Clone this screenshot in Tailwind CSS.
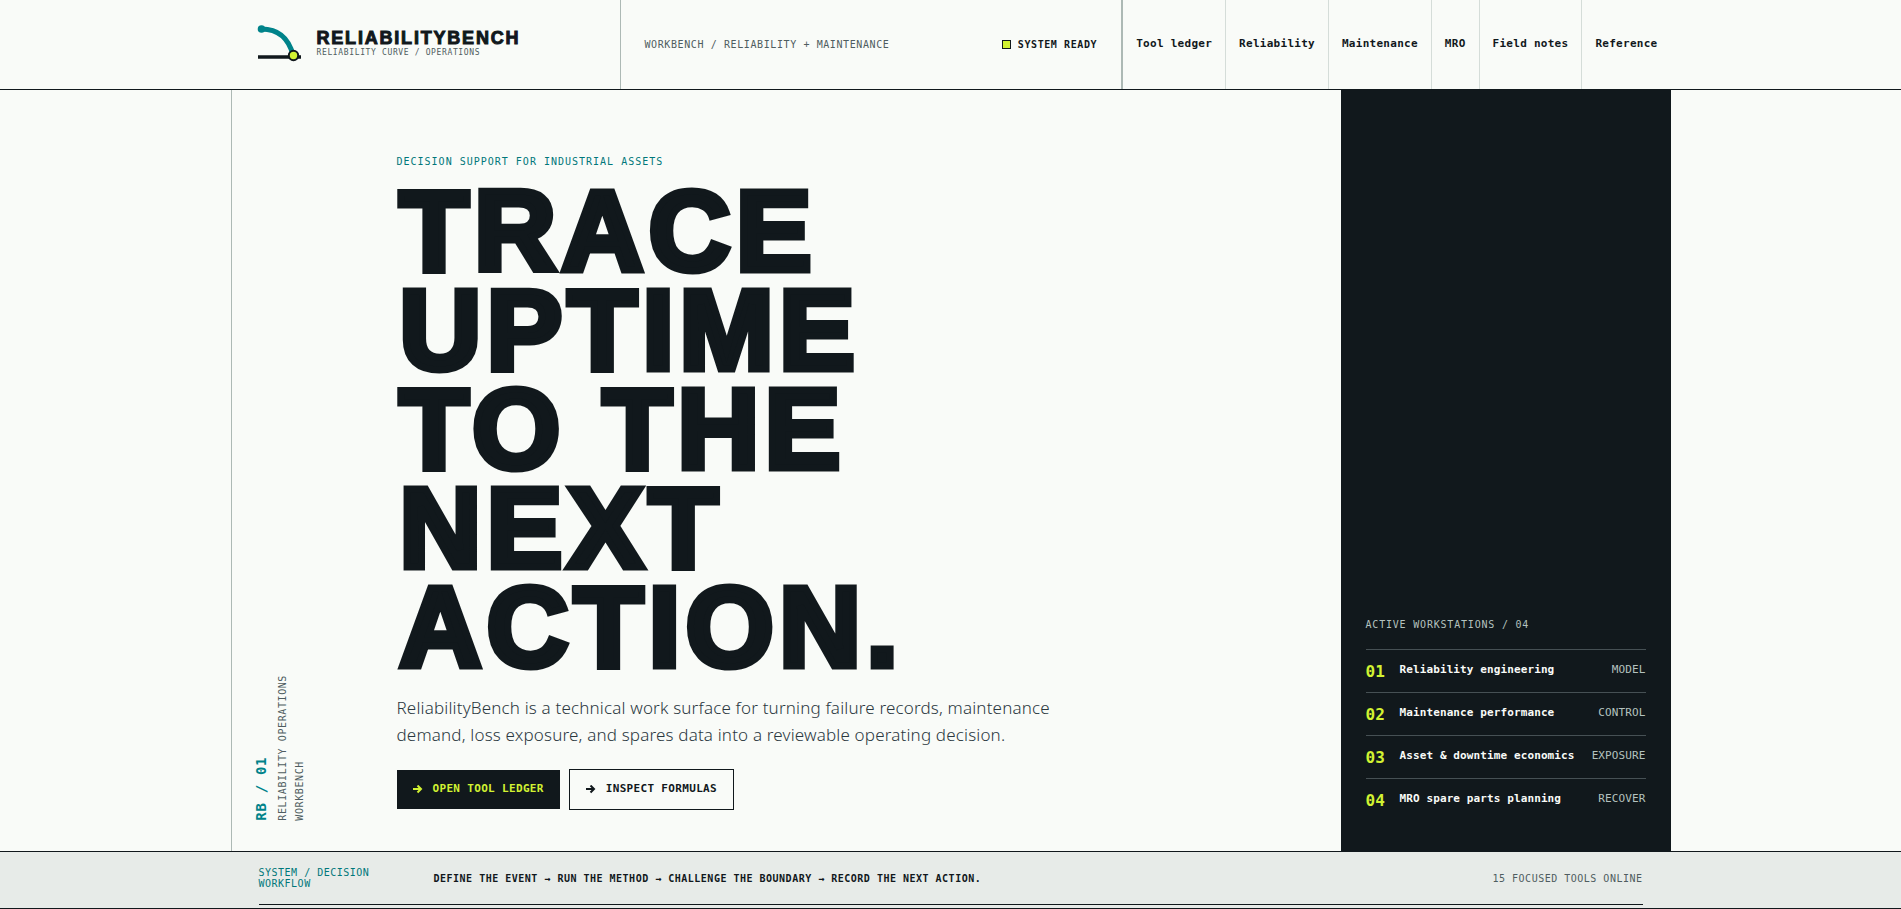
<!DOCTYPE html>
<html lang="en">
<head>
    <meta charset="UTF-8">
    <meta name="viewport" content="width=device-width, initial-scale=1.0">
    <title>ReliabilityBench</title>
    <script src="https://cdn.jsdelivr.net/npm/@tailwindcss/browser@4"></script>
</head>
<body class="bg-[#f9fbf8] text-[#11181c] font-['DejaVu_Sans_Mono',monospace] overflow-x-hidden">
    <!-- Header -->
    <header class="border-b border-[#11181c]">
        <div class="max-w-[1440px] mx-auto flex h-[89px]">
            <a href="#" class="w-[389px] shrink-0 flex items-center gap-4 pl-[26px] pb-0.5">
                <svg class="w-[44px] h-[40px] shrink-0" viewBox="0 0 44 40" fill="none">
                    <path d="M1 33H44" stroke="#11181c" stroke-width="3.500"/>
                    <path d="M4.500 5C20 5 31 12 36 31" stroke="#00838a" stroke-width="5"/>
                    <circle cx="4.500" cy="5" r="3.800" fill="#00838a"/>
                    <circle cx="36.500" cy="31.500" r="4.700" fill="#d2f232" stroke="#11181c" stroke-width="2"/>
                </svg>
                <span class="flex flex-col">
                    <span class="font-['Liberation_Sans',sans-serif] font-bold text-[18px] leading-[18px] tracking-widest [-webkit-text-stroke:1px_#11181c]">RELIABILITYBENCH</span>
                    <span class="text-[8px] leading-[12px] tracking-[0.08em] text-[#4f5d60]">RELIABILITY CURVE / OPERATIONS</span>
                </span>
            </a>
            <div class="flex-1 flex items-center justify-between px-6 border-l border-r-2 border-[#adb9b5] text-[10px] tracking-[0.06em] whitespace-nowrap">
                <span class="text-[#4f5d60]">WORKBENCH / RELIABILITY + MAINTENANCE</span>
                <span class="flex items-center gap-[7px] font-bold">
                    <span class="size-[9px] bg-[#d2f232] border border-[#11181c]"></span>SYSTEM READY
                </span>
            </div>
            <nav class="flex text-[11px] font-bold tracking-wide whitespace-nowrap divide-x divide-[#d5ddd9]">
                <a href="#" class="flex items-center px-[13px]">Tool ledger</a>
                <a href="#" class="flex items-center px-[13px]">Reliability</a>
                <a href="#" class="flex items-center px-[13px]">Maintenance</a>
                <a href="#" class="flex items-center px-[13px]">MRO</a>
                <a href="#" class="flex items-center px-[13px]">Field notes</a>
                <a href="#" class="flex items-center px-[13px]">Reference</a>
            </nav>
        </div>
    </header>

    <!-- Hero -->
    <main class="max-w-[1440px] mx-auto flex border-l border-[#adb9b5]">
        <div class="w-[165px] shrink-0 flex items-end pl-5 pb-[30px]">
            <div class="[writing-mode:vertical-rl] rotate-180">
                <p class="text-[14px] leading-[18px] font-bold tracking-[0.05em] text-[#00838a]">RB / 01</p>
                <p class="mr-1 text-[10px] leading-[17px] tracking-[0.06em] text-[#4f5d60]">RELIABILITY OPERATIONS<br>WORKBENCH</p>
            </div>
        </div>

        <section class="flex-1 pt-16 pb-[41px]">
            <p class="text-[10px] leading-[16px] tracking-widest text-[#00777a]">DECISION SUPPORT FOR INDUSTRIAL ASSETS</p>
            <h1 class="mt-3 pl-[3px] font-['Liberation_Sans',sans-serif] font-bold text-[113px] leading-[99px] tracking-wider [-webkit-text-stroke:7px_#11181c]">TRACE<br>UPTIME<br>TO THE<br>NEXT<br>ACTION.</h1>
            <p class="mt-[17px] max-w-[680px] font-['Noto_Sans',sans-serif] font-light text-[17px] leading-[27px] tracking-[0.01em] text-[#2b383f]">ReliabilityBench is a technical work surface for turning failure records, maintenance demand, loss exposure, and spares data into a reviewable operating decision.</p>
            <div class="mt-[21px] flex items-center gap-[9px] text-[11px] font-bold tracking-[0.03em]">
                <a href="#" class="flex items-center gap-[10px] h-[39px] px-4 bg-[#11181c] text-[#d2f232]">
                    <svg class="size-[10px]" viewBox="0 0 10 10" fill="none" stroke="currentColor" stroke-width="2"><path d="M0 4H8M4.500 0.500L8 4L4.500 7.500"/></svg>OPEN TOOL LEDGER
                </a>
                <a href="#" class="flex items-center gap-[10px] h-[41px] px-4 border border-[#11181c]">
                    <svg class="size-[10px]" viewBox="0 0 10 10" fill="none" stroke="currentColor" stroke-width="2"><path d="M0 4H8M4.500 0.500L8 4L4.500 7.500"/></svg>INSPECT FORMULAS
                </a>
            </div>
        </section>

        <aside class="w-[330px] shrink-0 flex flex-col justify-end px-[25px] pb-[30px] bg-[#11181c] text-[11px] font-bold tracking-[0.01em]">
            <h2 class="mb-4 text-[10px] leading-[16px] font-normal tracking-[0.08em] text-[#b4c2bf]">ACTIVE WORKSTATIONS / 04</h2>
            <ol>
                <li class="h-[43px] flex items-start pt-3 border-t border-[#465054]">
                    <span class="w-[34px] text-[16px] leading-5 tracking-normal text-[#d2f232]">01</span>
                    <a href="#" class="flex-1 text-[#f9fbf8]">Reliability engineering</a>
                    <span class="font-normal text-[#b4c2bf]">MODEL</span>
                </li>
                <li class="h-[43px] flex items-start pt-3 border-t border-[#465054]">
                    <span class="w-[34px] text-[16px] leading-5 tracking-normal text-[#d2f232]">02</span>
                    <a href="#" class="flex-1 text-[#f9fbf8]">Maintenance performance</a>
                    <span class="font-normal text-[#b4c2bf]">CONTROL</span>
                </li>
                <li class="h-[43px] flex items-start pt-3 border-t border-[#465054]">
                    <span class="w-[34px] text-[16px] leading-5 tracking-normal text-[#d2f232]">03</span>
                    <a href="#" class="flex-1 text-[#f9fbf8]">Asset &amp; downtime economics</a>
                    <span class="font-normal text-[#b4c2bf]">EXPOSURE</span>
                </li>
                <li class="h-[43px] flex items-start pt-3 border-t border-[#465054]">
                    <span class="w-[34px] text-[16px] leading-5 tracking-normal text-[#d2f232]">04</span>
                    <a href="#" class="flex-1 text-[#f9fbf8]">MRO spare parts planning</a>
                    <span class="font-normal text-[#b4c2bf]">RECOVER</span>
                </li>
            </ol>
        </aside>
    </main>

    <!-- Workflow strip -->
    <section class="border-y border-[#11181c] bg-[#e7ebe8] pb-[3px]">
        <div class="max-w-[1440px] mx-auto px-7">
            <div class="flex items-center h-[53px] border-b border-[#11181c] text-[10px] leading-[11px] tracking-[0.05em]">
                <p class="w-[175px] shrink-0 text-[#00777a]">SYSTEM / DECISION<br>WORKFLOW</p>
                <p class="flex-1 font-bold">DEFINE THE EVENT → RUN THE METHOD → CHALLENGE THE BOUNDARY → RECORD THE NEXT ACTION.</p>
                <p class="text-[#4f5d60]">15 FOCUSED TOOLS ONLINE</p>
            </div>
        </div>
    </section>
</body>
</html>
